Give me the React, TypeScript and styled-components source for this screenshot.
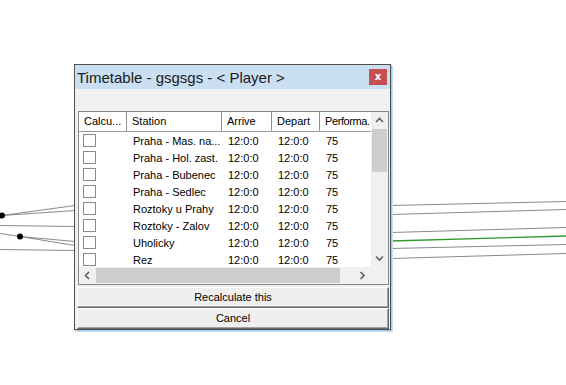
import React from "react";
import styled, { createGlobalStyle } from "styled-components";

const GlobalStyle = createGlobalStyle`
  html, body { margin: 0; padding: 0; background: #ffffff; }
  body { width: 566px; height: 385px; overflow: hidden; font-family: "Liberation Sans", Arial, sans-serif; }
`;

const Desktop = styled.div`
  position: relative;
  width: 566px;
  height: 385px;
  background: #ffffff;
  overflow: hidden;
`;

const Canvas = styled.svg`
  position: absolute;
  left: 0;
  top: 0;
`;

const Window = styled.div`
  position: absolute;
  left: 74px;
  top: 64px;
  width: 317px;
  height: 266px;
  box-sizing: border-box;
  border: 1px solid #4e4e4e;
  box-shadow: 1px 1px 0 #a8cce8, 2px 2px 0 #c6def1;
  display: flex;
  flex-direction: column;
  background: #f0f0f0;
`;

const TitleBar = styled.div`
  height: 24px;
  flex: none;
  display: flex;
  align-items: center;
  justify-content: space-between;
  padding: 0 3px 0 2px;
  background: #cadff1;
`;

const Title = styled.span`
  font-family: "Liberation Sans", Arial, sans-serif;
  font-size: 15px;
  color: #1a1a1a;
  white-space: nowrap;
`;

const CloseButton = styled.div`
  width: 18px;
  height: 16px;
  background: #c74f4f;
  color: #ffffff;
  font-family: "DejaVu Sans", sans-serif;
  font-weight: bold;
  font-size: 10px;
  line-height: 15px;
  text-align: center;
`;

const Client = styled.div`
  flex: 1;
  display: flex;
  flex-direction: column;
  padding: 22px 1px 0 2px;
`;

const ListView = styled.div`
  margin-left: 1px;
  height: 174px;
  box-sizing: border-box;
  border: 1px solid #828790;
  background: #ffffff;
  display: grid;
  grid-template-columns: 1fr 17px;
  grid-template-rows: 1fr 17px;
`;

const ListBody = styled.div`
  overflow: hidden;
  display: flex;
  flex-direction: column;
`;

const Header = styled.div`
  display: flex;
  height: 20px;
  flex: none;
  border-bottom: 1px solid #9a9a9a;
  box-sizing: border-box;
  background: #ffffff;
`;

const HeaderCell = styled.div<{ $w: number; $tight?: boolean }>`
  width: ${(p) => p.$w}px;
  flex: none;
  box-sizing: border-box;
  border-right: 1px solid #8e8e8e;
  padding-left: 5px;
  font-size: 11px;
  letter-spacing: ${(p) => (p.$tight ? "-0.4px" : "0")};
  line-height: 19px;
  color: #000;
  white-space: nowrap;
  overflow: hidden;
`;

const Row = styled.div`
  display: flex;
  height: 17px;
  flex: none;
  align-items: center;
`;

const Cell = styled.div<{ $w: number }>`
  width: ${(p) => p.$w}px;
  flex: none;
  box-sizing: border-box;
  padding-left: 6px;
  font-size: 11px;
  color: #000;
  white-space: nowrap;
  overflow: hidden;
`;

const CheckCell = styled.div<{ $w: number }>`
  width: ${(p) => p.$w}px;
  flex: none;
  padding-left: 4px;
  box-sizing: border-box;
  display: flex;
  align-items: center;
`;

const CheckBox = styled.div`
  width: 13px;
  height: 13px;
  box-sizing: border-box;
  border: 1px solid #8a8a8a;
  background: #ffffff;
`;

const VScroll = styled.div`
  display: flex;
  flex-direction: column;
  background: #f0f0f0;
`;

const HScroll = styled.div`
  display: flex;
  background: #f0f0f0;
`;

const ArrowBox = styled.div`
  width: 17px;
  height: 17px;
  flex: none;
  display: flex;
  align-items: center;
  justify-content: center;
`;

const VThumbArea = styled.div`
  flex: 1;
  padding: 0 1px;
`;

const VThumb = styled.div`
  height: 43px;
  background: #cdcdcd;
`;

const HThumbArea = styled.div`
  flex: 1;
  padding: 1px 0;
`;

const HThumb = styled.div`
  width: 244px;
  height: 100%;
  background: #cdcdcd;
`;

const Corner = styled.div`
  background: #f0f0f0;
`;

const Button = styled.div<{ $first?: boolean }>`
  height: 21px;
  margin-top: ${(p) => (p.$first ? "2px" : "0")};
  box-sizing: border-box;
  border: 1px solid;
  border-color: #ffffff #696969 #696969 #ffffff;
  box-shadow: inset -1px -1px 0 #a0a0a0;
  background: #efefef;
  font-size: 11px;
  line-height: 18px;
  text-align: center;
  color: #000;
`;

const Chevron = ({ dir }: { dir: "up" | "down" | "left" | "right" }) => {
  const paths: Record<string, string> = {
    up: "M1 5 L4.5 1.5 L8 5",
    down: "M1 1.5 L4.5 5 L8 1.5",
    left: "M5 1 L1.5 4.5 L5 8",
    right: "M1.5 1 L5 4.5 L1.5 8",
  };
  const vertical = dir === "up" || dir === "down";
  return (
    <svg width={vertical ? 9 : 7} height={vertical ? 7 : 9} viewBox={vertical ? "0 0 9 7" : "0 0 7 9"}>
      <path d={paths[dir]} fill="none" stroke="#606060" strokeWidth="1.6" />
    </svg>
  );
};

const stations = [
  "Praha - Mas. na...",
  "Praha - Hol. zast.",
  "Praha - Bubenec",
  "Praha - Sedlec",
  "Roztoky u Prahy",
  "Roztoky - Zalov",
  "Uholicky",
  "Rez",
];

const cols = [48, 95, 50, 48, 60];

export default function App() {
  return (
    <Desktop>
      <GlobalStyle />
      <Canvas width={566} height={385}>
        <g stroke="#8a8a8a" strokeWidth="1" fill="none">
          <line x1="2" y1="215.5" x2="75" y2="205.5" />
          <line x1="2" y1="215.5" x2="75" y2="210.5" />
          <line x1="0" y1="225.5" x2="75" y2="226.5" />
          <line x1="0" y1="233.5" x2="20" y2="236.5" />
          <line x1="20" y1="236.5" x2="75" y2="241.5" />
          <line x1="20" y1="236.5" x2="75" y2="245.5" />
          <line x1="0" y1="249.5" x2="75" y2="250.5" />
          <line x1="391" y1="205.5" x2="566" y2="201.5" />
          <line x1="391" y1="214.5" x2="566" y2="209.5" />
          <line x1="391" y1="232.5" x2="566" y2="227.5" />
          <line x1="391" y1="248.5" x2="566" y2="244.5" />
          <line x1="391" y1="258.5" x2="566" y2="253.5" />
        </g>
        <line x1="391" y1="241" x2="566" y2="236" stroke="#2e9a2e" strokeWidth="1.3" />
        <circle cx="2" cy="215.5" r="3" fill="#000" />
        <circle cx="20" cy="236.5" r="3" fill="#000" />
      </Canvas>
      <Window>
        <TitleBar>
          <Title>Timetable - gsgsgs - &lt; Player &gt;</Title>
          <CloseButton>x</CloseButton>
        </TitleBar>
        <Client>
          <ListView>
            <ListBody>
              <Header>
                <HeaderCell $w={cols[0]}>Calcu...</HeaderCell>
                <HeaderCell $w={cols[1]}>Station</HeaderCell>
                <HeaderCell $w={cols[2]}>Arrive</HeaderCell>
                <HeaderCell $w={cols[3]}>Depart</HeaderCell>
                <HeaderCell $w={cols[4]} $tight>
                  Performa.
                </HeaderCell>
              </Header>
              {stations.map((s) => (
                <Row key={s}>
                  <CheckCell $w={cols[0]}>
                    <CheckBox />
                  </CheckCell>
                  <Cell $w={cols[1]}>{s}</Cell>
                  <Cell $w={cols[2]}>12:0:0</Cell>
                  <Cell $w={cols[3]}>12:0:0</Cell>
                  <Cell $w={cols[4]}>75</Cell>
                </Row>
              ))}
            </ListBody>
            <VScroll>
              <ArrowBox>
                <Chevron dir="up" />
              </ArrowBox>
              <VThumbArea>
                <VThumb />
              </VThumbArea>
              <ArrowBox>
                <Chevron dir="down" />
              </ArrowBox>
            </VScroll>
            <HScroll>
              <ArrowBox>
                <Chevron dir="left" />
              </ArrowBox>
              <HThumbArea>
                <HThumb />
              </HThumbArea>
              <ArrowBox>
                <Chevron dir="right" />
              </ArrowBox>
            </HScroll>
            <Corner />
          </ListView>
          <Button $first>Recalculate this</Button>
          <Button>Cancel</Button>
        </Client>
      </Window>
    </Desktop>
  );
}
